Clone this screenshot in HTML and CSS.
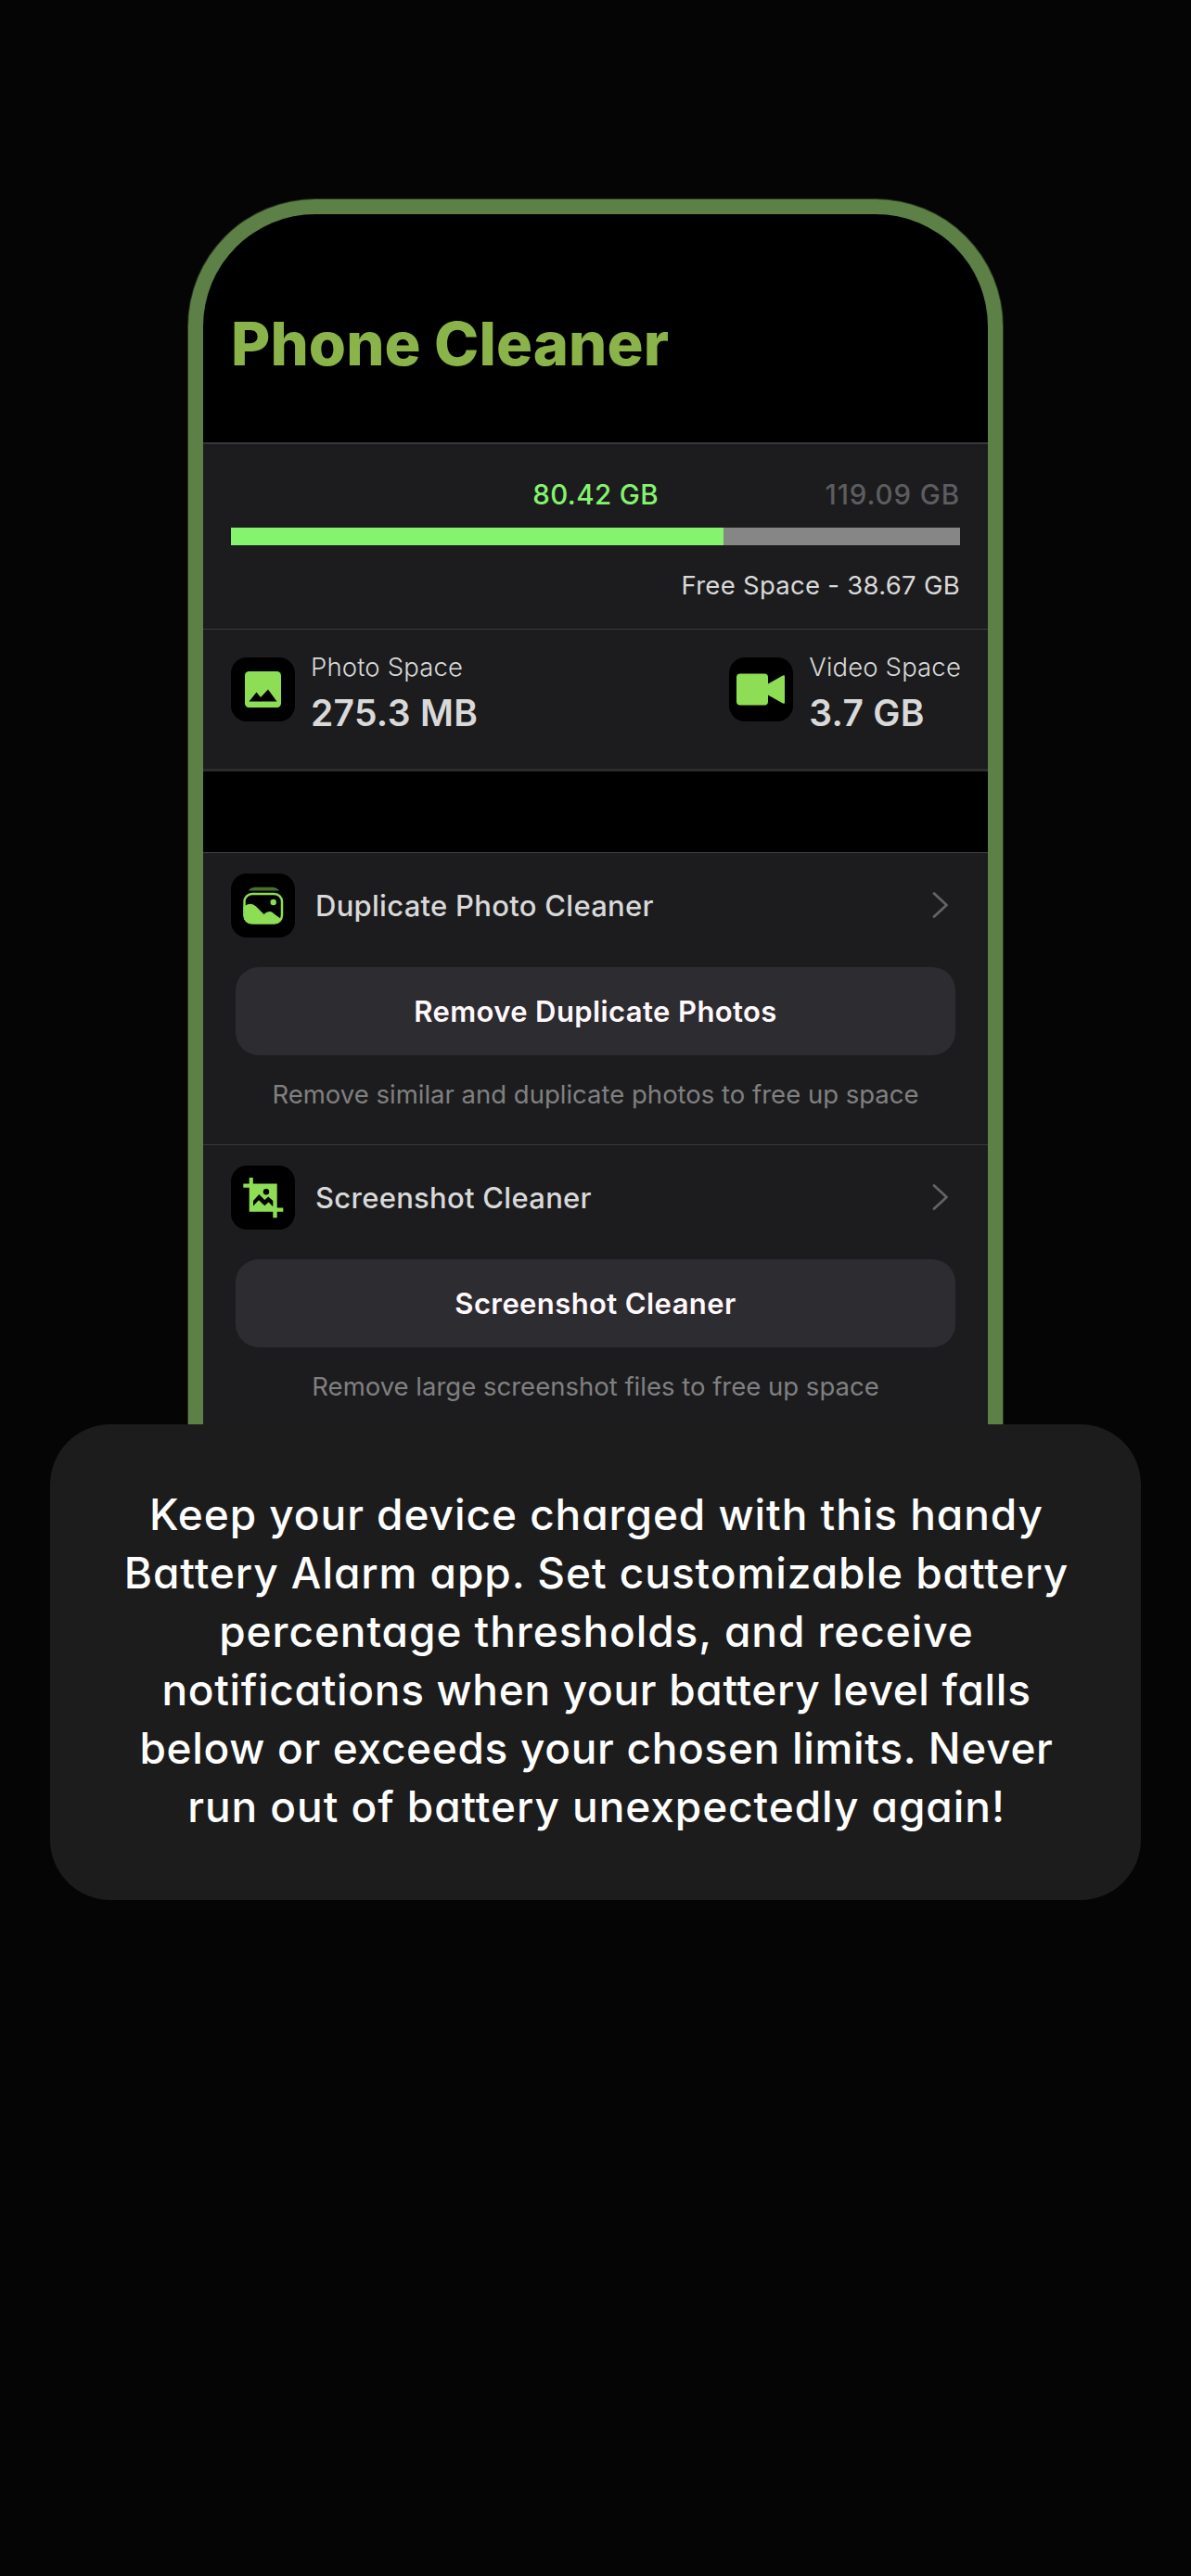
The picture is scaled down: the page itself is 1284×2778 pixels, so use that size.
FILE: index.html
```html
<!DOCTYPE html>
<html lang="en">
<head>
<meta charset="utf-8">
<title>Phone Cleaner</title>
<link rel="stylesheet" href="styles.css">
</head>
<body>
<main class="page">
  <section class="phone">
    <div class="screen">
      <header class="header"><h1 class="title">Phone Cleaner</h1></header>
      <section class="storage">
        <div class="usage">
          <div class="usage-labels"><span class="used">80.42 GB</span><span class="total">119.09 GB</span></div>
          <div class="bar"><div class="bar-fill" style="width:67.5%"></div></div>
          <p class="free">Free Space - 38.67 GB</p>
        </div>
        <div class="spaces">
          <div class="space">
            <svg class="tile" viewBox="0 0 69 69"><rect width="69" height="69" rx="17"/><rect class="g" x="15" y="15" width="39" height="39" rx="4.5"/><path d="M19.5 47.5 27.5 37.5 32 43 40 34.500 49.500 47.500Z"/></svg>
            <div class="space-text"><span class="space-name">Photo Space</span><strong class="space-size">275.3 MB</strong></div>
          </div>
          <div class="space">
            <svg class="tile" viewBox="0 0 69 69"><rect width="69" height="69" rx="17"/><rect class="g" x="8" y="17.500" width="34" height="34" rx="4"/><path class="g" d="M41 29 58 19.500Q60 18.500 60 20.500V48.500Q60 50.500 58 49.500L41 40Z"/></svg>
            <div class="space-text"><span class="space-name">Video Space</span><strong class="space-size">3.7 GB</strong></div>
          </div>
        </div>
      </section>
      <section class="tools">
        <article class="tool">
          <div class="tool-head">
            <svg class="tile" viewBox="0 0 69 69"><rect width="69" height="69" rx="17"/><path class="dim" d="M18.700 18.500Q21 14.700 27 14.700H43.500Q50 14.700 52 18.500Z"/><rect class="line" x="14.500" y="22" width="40.500" height="31.500" rx="8.500"/><circle class="g" cx="45.700" cy="31" r="3.200"/><path class="g" d="M13.500 36Q21 30 27 35.500L35.500 44Q41.500 38.500 46.500 43.500L54 49Q52.500 54 46 54H23Q13.500 54 13.500 45Z"/></svg>
            <h2 class="tool-name">Duplicate Photo Cleaner</h2>
            <svg class="chevron" viewBox="0 0 18 28"><path d="M2 1.500 15.500 14 2 26.500"/></svg>
          </div>
          <button class="action">Remove Duplicate Photos</button>
          <p class="hint">Remove similar and duplicate photos to free up space</p>
        </article>
        <article class="tool">
          <div class="tool-head">
            <svg class="tile" viewBox="0 0 69 69"><rect width="69" height="69" rx="17"/><path class="g" d="M19.700 13H23.800V19.500H49.700V45.500H56.300V49.800H49.700V56.300H45.300V49.800H19.700V23.700H13.300V19.500H19.700Z"/><circle cx="38" cy="28.200" r="3.200"/><path d="M24 38 30.300 31 36.300 37 40.300 33.500 45.300 38V44.200L40.500 39.500 36.300 43.300 30 37.300 24 43.500Z"/></svg>
            <h2 class="tool-name">Screenshot Cleaner</h2>
            <svg class="chevron" viewBox="0 0 18 28"><path d="M2 1.500 15.500 14 2 26.500"/></svg>
          </div>
          <button class="action">Screenshot Cleaner</button>
          <p class="hint">Remove large screenshot files to free up space</p>
        </article>
      </section>
    </div>
  </section>
  <section class="caption">
    <p class="caption-text">
      <span>Keep your device charged with this handy</span>
      <span>Battery Alarm app. Set customizable battery</span>
      <span>percentage thresholds, and receive</span>
      <span class="tight">notifications when your battery level falls</span>
      <span class="tight">below or exceeds your chosen limits. Never</span>
      <span>run out of battery unexpectedly again!</span>
    </p>
  </section>
</main>
</body>
</html>
```
FILE: styles.css
```css
* { box-sizing: border-box; margin: 0; padding: 0; }
body { background: #050505; font-family: Inter, "Liberation Sans", sans-serif; }
.page { width: 1284px; height: 2778px; padding-top: 215px; overflow: hidden; }
.phone { width: 878px; height: 1321px; margin-left: 203px; padding: 16px 16px 0; background: #5d8046; border-radius: 137px 137px 0 0; box-shadow: 0 0 0 1px rgba(93, 128, 70, 0.4); }
.screen { height: 1305px; background: #000; border-radius: 121px 121px 0 0; overflow: hidden; }
.header { height: 246px; padding: 96px 0 0 30px; }
.title { font-size: 65px; line-height: 88px; font-weight: 800; letter-spacing: 0.1px; color: #8ab34a; white-space: nowrap; }
.storage { height: 355px; background: #1c1c1e; border-top: 2px solid #38383a; border-bottom: 3px solid #2c2c2e; }
.usage { height: 199px; padding: 33px 30px 0; }
.usage-labels { display: flex; justify-content: space-between; height: 44px; line-height: 43px; font-size: 29.500px; font-weight: 500; color: #5d5d5f; }
.used { width: 461px; text-align: right; letter-spacing: 0.4px; color: #86f36f; }
.total { letter-spacing: 0.9px; }
.bar { height: 19px; margin-top: 13px; background: #868686; }
.bar-fill { height: 19px; background: #86f36f; }
.free { margin-top: 23px; line-height: 40px; text-align: right; font-size: 27.500px; letter-spacing: 0.28px; color: #d9d9d9; }
.spaces { display: flex; justify-content: space-between; border-top: 1px solid #3a3a3c; padding: 30px 29px 0 30px; }
.space { display: flex; gap: 17px; }
.tile { width: 69px; height: 69px; flex: none; }
.g { fill: #8ede55; }
.dim { fill: #47702b; }
.line { fill: none; stroke: #8ede55; stroke-width: 2.500; }
.space-text { display: flex; flex-direction: column; color: #d9d9d9; margin-top: -8px; white-space: nowrap; }
.space-name { font-size: 27.500px; line-height: 36px; font-weight: 300; letter-spacing: 0.15px; }
.space-size { font-size: 39px; line-height: 64px; font-weight: 600; letter-spacing: 0.3px; }
.tools { margin-top: 87px; height: 640px; background: #1c1c1e; }
.tool { height: 315px; border-top: 1px solid #464648; padding: 21px 30px 0; }
.tool + .tool { border-top-color: #38383a; }
.tool-head { display: flex; align-items: center; height: 70px; }
.tool-name { flex: 1; margin-left: 22px; font-size: 31px; font-weight: 500; letter-spacing: 0.28px; color: #d9d9d9; }
.chevron { width: 18px; height: 28px; margin-right: 12px; }
.chevron path { fill: none; stroke: #636366; stroke-width: 2.800; stroke-linecap: round; stroke-linejoin: round; }
.action { display: block; width: 776px; height: 95px; margin: 32px auto 0; border: 0; padding-bottom: 1px; border-radius: 25px; background: #2d2c31; color: #fff9fc; font: 600 31px Inter, sans-serif; letter-spacing: 0.4px; }
.hint { margin-top: 22px; line-height: 40px; text-align: center; font-size: 27.500px; color: #808080; white-space: nowrap; }
.caption { width: 1176px; height: 513px; margin-left: 54px; padding-top: 66px; border-radius: 65px; background: #1c1c1c; }
.caption-text { display: flex; flex-direction: column; align-items: center; padding-left: 2px; color: #fff; font-size: 46px; line-height: 63px; font-weight: 500; letter-spacing: 0.94px; font-feature-settings: "cv11"; white-space: nowrap; }
.caption-text .tight { letter-spacing: 0.680px; }
```
